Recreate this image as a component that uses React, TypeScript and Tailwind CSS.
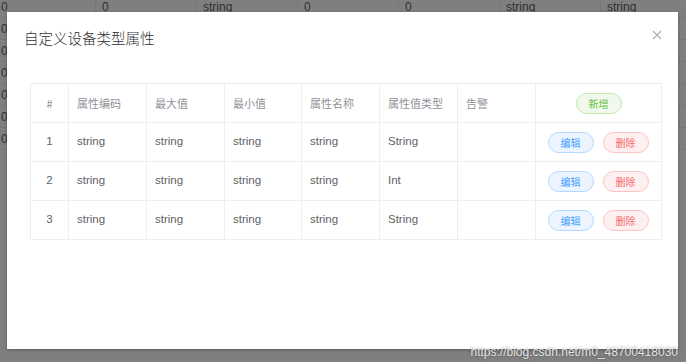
import React from "react";

const font = { fontFamily: '"Liberation Sans", Arial, "Noto Sans CJK SC", sans-serif' };

const bgCols = ["0", "0", "string", "0", "0", "string", "string"];

const rows = [
  { id: 1, type: "String" },
  { id: 2, type: "Int" },
  { id: 3, type: "String" },
];

const widths = ["w-[38px]", "w-[78px]", "w-[78px]", "w-[77px]", "w-[78px]", "w-[78px]", "w-[78px]", "w-[127px]"];

function Cell({ i, children, className = "" }: { i: number; children?: React.ReactNode; className?: string }) {
  return (
    <div
      className={`${widths[i]} shrink-0 flex items-center ${i < 7 ? "border-r border-[#ebeef5]" : ""} ${
        i === 0 ? "justify-center" : i === 7 ? "justify-center" : "pl-[8px]"
      } ${className}`}
    >
      {children}
    </div>
  );
}

const cjk = { fontFamily: '"Noto Sans CJK SC", sans-serif' };

export default function App() {
  return (
    <div className="relative w-[686px] h-[362px] overflow-hidden bg-white" style={font}>
      {/* background page */}
      <div className="flex flex-col -mt-[4px] -ml-[5px] text-[12px] text-[#606266]">
        {Array.from({ length: 7 }).map((_, r) => (
          <div key={r} className="flex h-[22px] border-b border-[#ebeef5]">
            {bgCols.map((c, i) => (
              <div key={i} className="w-[101px] shrink-0 pl-[6px] flex items-center border-r border-[#ebeef5]">
                {r === 0 || i === 0 ? c : ""}
              </div>
            ))}
          </div>
        ))}
      </div>

      {/* overlay */}
      <div className="absolute inset-0 bg-black/50" />

      {/* dialog */}
      <div className="absolute left-[7px] top-[12px] w-[671px] h-[337px] bg-white shadow-[0_1px_3px_rgba(0,0,0,0.3)] flex flex-col">
        <div className="flex items-start justify-between pl-[17px] pr-[16px] pt-[19px] h-[52px]">
          <span className="text-[14.5px] text-[#303133] leading-none" style={{ ...cjk, fontWeight: 300 }}>
            自定义设备类型属性
          </span>
          <svg width="10" height="10" viewBox="0 0 10 10" className="-mt-[1px]">
            <path d="M1 1 L9 9 M9 1 L1 9" stroke="#a8abb2" strokeWidth="1.1" />
          </svg>
        </div>

        <div className="ml-[23px] mt-[19px] w-[632px] border border-[#ebeef5] border-b-0">
          {/* header */}
          <div className="flex h-[39px] border-b border-[#ebeef5] text-[11px] text-[#909399]" style={cjk}>
            {["#", "属性编码", "最大值", "最小值", "属性名称", "属性值类型", "告警"].map((h, i) => (
              <Cell key={i} i={i}>
                {h}
              </Cell>
            ))}
            <Cell i={7} className="pr-[2px]">
              <button
                className="w-[46px] h-[21px] rounded-full border border-[#c2e7b0] bg-[#f0f9eb] text-[#67c23a] text-[10px] flex items-center justify-center"
                style={cjk}
              >
                新增
              </button>
            </Cell>
          </div>
          {rows.map((r) => (
            <div key={r.id} className="flex h-[39px] border-b border-[#ebeef5] text-[11.5px] text-[#606266]">
              <Cell i={0}>{r.id}</Cell>
              <Cell i={1}>string</Cell>
              <Cell i={2}>string</Cell>
              <Cell i={3}>string</Cell>
              <Cell i={4}>string</Cell>
              <Cell i={5}>{r.type}</Cell>
              <Cell i={6}></Cell>
              <Cell i={7} className="gap-[9px] pr-[3px]">
                <button
                  className="w-[46px] h-[21px] rounded-full border border-[#b3d8ff] bg-[#ecf5ff] text-[#409eff] text-[10px] flex items-center justify-center"
                  style={cjk}
                >
                  编辑
                </button>
                <button
                  className="w-[46px] h-[21px] rounded-full border border-[#fbc4c4] bg-[#fef0f0] text-[#f56c6c] text-[10px] flex items-center justify-center"
                  style={cjk}
                >
                  删除
                </button>
              </Cell>
            </div>
          ))}
        </div>
      </div>

      {/* watermark */}
      <div className="absolute right-[8px] top-[343px] text-[12px] text-white/85 [text-shadow:0_0_2px_rgba(0,0,0,0.5)]">
        https://blog.csdn.net/m0_48700418030
      </div>
    </div>
  );
}
